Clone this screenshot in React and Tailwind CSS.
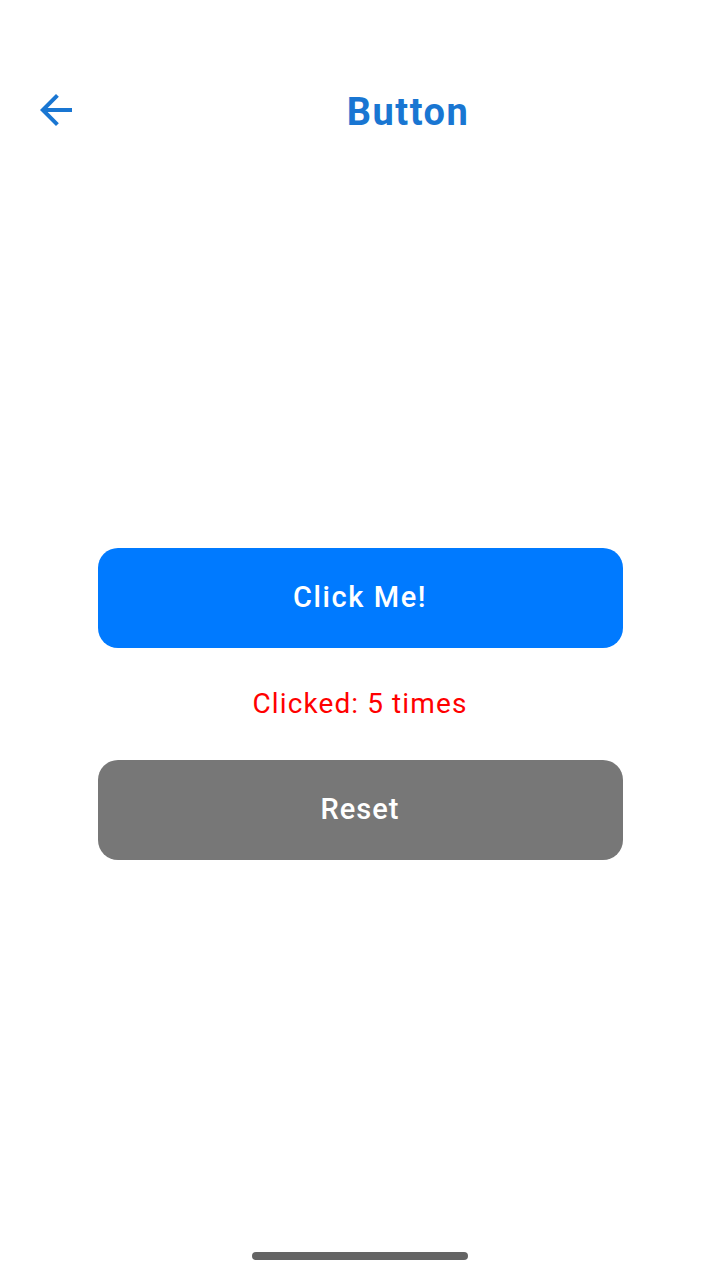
export default function App() {
  return (
    <div
      className="relative flex h-[1280px] w-[720px] flex-col bg-white"
      style={{ fontFamily: "Roboto, 'Noto Sans', sans-serif" }}
    >
      {/* Header */}
      <div className="mt-[86px] flex h-12 items-center">
        <div className="flex w-24 pl-8">
          <svg viewBox="0 0 24 24" className="h-12 w-12" fill="#1976D2">
            <path d="M20 11H7.83l5.59-5.59L12 4l-8 8 8 8 1.41-1.41L7.83 13H20v-2z" />
          </svg>
        </div>
        <h1 className="flex-1 pt-1 text-center text-[38px] font-bold tracking-[1.5px] text-[#1976D2]">
          Button
        </h1>
      </div>

      {/* Body */}
      <div className="mt-[414px] flex flex-col items-center">
        <button className="flex h-[100px] w-[525px] items-center justify-center rounded-[20px] bg-[#007AFF] text-[29px] font-medium tracking-[1.6px] text-white">
          Click Me!
        </button>
        <p className="mt-[35px] text-[28px] tracking-[1.1px] text-[#FF0000]">Clicked: 5 times</p>
        <button className="mt-[35px] flex h-[100px] w-[525px] items-center justify-center rounded-[20px] bg-[#777777] text-[29px] font-medium tracking-[1px] text-white">
          Reset
        </button>
      </div>

      {/* Home indicator */}
      <div className="absolute bottom-5 left-1/2 h-2 w-[216px] -translate-x-1/2 rounded-full bg-[#646464]" />
    </div>
  );
}
